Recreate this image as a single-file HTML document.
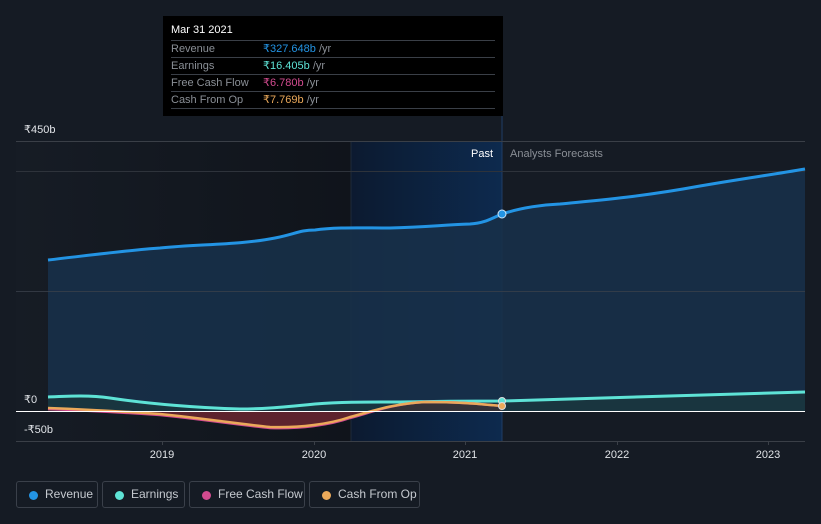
<!DOCTYPE html>
<html><head><meta charset="utf-8"><style>
body{margin:0;background:#151b24;width:821px;height:524px;overflow:hidden;font-family:"Liberation Sans",sans-serif;position:relative}
.tt{position:absolute;left:163px;top:16px;width:340px;height:100px;background:#000;}
.tt .row{position:absolute;left:8px;width:324px;font-size:11px;border-top:1px solid #3a3f47;height:16px;line-height:16px;color:#8a8f96}
.tt .v{position:absolute;left:92px}
.leg{position:absolute;top:481px;height:27px;border:1px solid #3a404a;border-radius:3px;box-sizing:border-box;color:#c5c9cf;font-size:12px;line-height:25px;padding-left:28px}
.leg i{position:absolute;left:12px;top:9px;width:9px;height:9px;border-radius:50%}
</style></head><body>
<svg width="821" height="524" style="position:absolute;left:0;top:0">
<defs>
<linearGradient id="past" x1="0" x2="1"><stop offset="0" stop-color="#0c1a30"/><stop offset="1" stop-color="#0d2a4e"/></linearGradient>
<linearGradient id="lft" x1="0" x2="1"><stop offset="0" stop-color="#161c25"/><stop offset="1" stop-color="#10141b"/></linearGradient>
</defs>
<rect x="16" y="141" width="335" height="300" fill="url(#lft)"/>
<rect x="351" y="141" width="151" height="300" fill="url(#past)"/>
<line x1="351" y1="141" x2="351" y2="441" stroke="#1e2a3a"/>
<line x1="502" y1="116" x2="502" y2="441" stroke="#1f3d66"/>
<path d="M48,260 C100,254 130,250 160,248 C200,244 240,245 275,238 C295,234 300,230 315,230 C335,227 360,228 390,228 C430,227 440,225 470,224 C485,223 490,219 502,214 C520,208 540,205 560,204 C600,200 640,197 700,186 C740,179 770,175 805,169 L805,411 L48,411Z" fill="#173049" opacity="0.9"/>
<path d="M48,408 C100,410 130,412 160,414 C200,418 240,424 270,427 C300,428 330,424 350,417 C370,412 390,404 425,402 C460,402 480,404 502,406 L502,411 L48,411Z" fill="#6b2630" opacity="0.85"/>
<path d="M48,397 C70,396 90,395 110,398 C150,404 200,408 240,409 C260,409 275,408 315,404 C340,402 360,402 400,402 C450,401 480,401 502,401 C600,398 700,395 805,392 L805,411 L48,411Z" fill="#1a3a3c" opacity="0.6"/>
<line x1="16" y1="141.5" x2="805" y2="141.5" stroke="#3a3f47"/>
<line x1="16" y1="171.5" x2="805" y2="171.5" stroke="#2e333b"/>
<line x1="16" y1="291.5" x2="805" y2="291.5" stroke="#3a404a" stroke-opacity="0.8"/>
<line x1="16" y1="441.5" x2="805" y2="441.5" stroke="#3a3f47"/>
<path d="M48,260 C100,254 130,250 160,248 C200,244 240,245 275,238 C295,234 300,230 315,230 C335,227 360,228 390,228 C430,227 440,225 470,224 C485,223 490,219 502,214 C520,208 540,205 560,204 C600,200 640,197 700,186 C740,179 770,175 805,169" fill="none" stroke="#2394e4" stroke-width="3"/>
<path d="M48,397 C70,396 90,395 110,398 C150,404 200,408 240,409 C260,409 275,408 315,404 C340,402 360,402 400,402 C450,401 480,401 502,401 C600,398 700,395 805,392" fill="none" stroke="#5ee3d6" stroke-width="3"/>
<path d="M48,409 C100,411 130,413 160,415 C200,419 240,425 270,428 C300,429 330,425 350,418 C370,413 390,404 425,402 C460,402 480,404 502,406" fill="none" stroke="#d24b8f" stroke-width="2.5"/>
<path d="M48,408 C100,410 130,412 160,414 C200,418 240,424 270,427 C300,428 330,424 350,417 C370,412 390,404 425,402 C460,402 480,404 502,406" fill="none" stroke="#eba95a" stroke-width="2.5"/>
<line x1="16" y1="411.5" x2="805" y2="411.5" stroke="#fff" stroke-width="1"/>
<circle cx="502" cy="214" r="4" fill="#2394e4" stroke="#cfe6f8" stroke-width="1"/>
<circle cx="502" cy="401" r="3.5" fill="#5ee3d6" stroke="#ddd" stroke-width="1"/>
<circle cx="502" cy="406" r="3.5" fill="#eba95a" stroke="#ddd" stroke-width="1"/>
<g stroke="#3a3f47"><line x1="162.5" y1="441" x2="162.5" y2="445"/><line x1="314.5" y1="441" x2="314.5" y2="445"/><line x1="465.5" y1="441" x2="465.5" y2="445"/><line x1="617.5" y1="441" x2="617.5" y2="445"/><line x1="768.5" y1="441" x2="768.5" y2="445"/></g>
<g font-size="11" fill="#e0e3e7" text-anchor="middle"><text x="162" y="458">2019</text><text x="314" y="458">2020</text><text x="465" y="458">2021</text><text x="617" y="458">2022</text><text x="768" y="458">2023</text></g>
<g font-size="11" fill="#e0e3e7"><text x="24" y="133">₹450b</text><text x="24" y="403">₹0</text><text x="24" y="433">-₹50b</text></g>
<text x="493" y="157" font-size="11" fill="#fff" text-anchor="end">Past</text>
<text x="510" y="157" font-size="11" fill="#8a8f96">Analysts Forecasts</text>
</svg>
<div class="tt">
<div style="position:absolute;left:8px;top:8px;font-size:11px;color:#fff">Mar 31 2021</div>
<div class="row" style="top:24px">Revenue<span class="v"><span style="color:#2394e4">₹327.648b</span> /yr</span></div>
<div class="row" style="top:41px">Earnings<span class="v"><span style="color:#5ee3d6">₹16.405b</span> /yr</span></div>
<div class="row" style="top:58px">Free Cash Flow<span class="v"><span style="color:#d24b8f">₹6.780b</span> /yr</span></div>
<div class="row" style="top:75px;border-bottom:1px solid #3a3f47">Cash From Op<span class="v"><span style="color:#eba95a">₹7.769b</span> /yr</span></div>
</div>
<div class="leg" style="left:16px;width:82px"><i style="background:#2394e4"></i>Revenue</div>
<div class="leg" style="left:102px;width:83px"><i style="background:#5ee3d6"></i>Earnings</div>
<div class="leg" style="left:189px;width:116px"><i style="background:#d24b8f"></i>Free Cash Flow</div>
<div class="leg" style="left:309px;width:111px"><i style="background:#eba95a"></i>Cash From Op</div>
</body></html>
